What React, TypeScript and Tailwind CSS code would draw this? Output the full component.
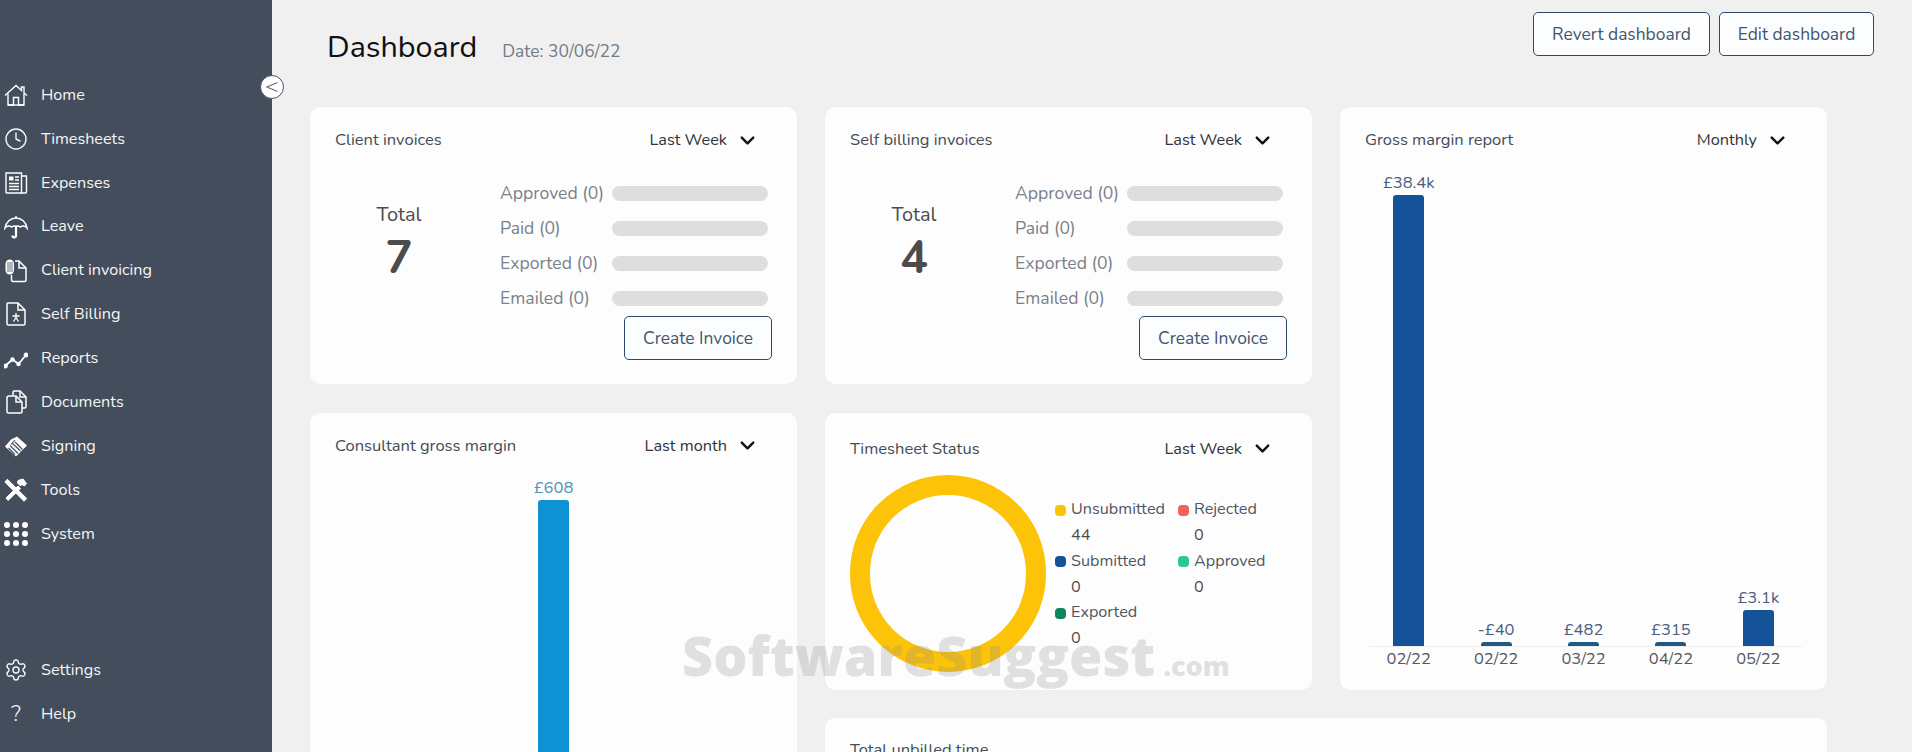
import React from "react";
import { ChevronDown, Clock, Settings } from "lucide-react";

const font = "font-['Nunito','Lato','Noto_Sans',sans-serif]";

function HomeIcon() {
  return (
    <svg viewBox="0 0 24 24" className="h-[24px] w-[24px]" fill="none" stroke="white" strokeWidth="1.4">
      <path d="M1 12.5 12 2.5l5.5 5V4H20v6l3 2.5" />
      <path d="M4 10.5V22h5.5v-7.5h5V22H20V10.5" />
      <path d="M4 22h16" />
    </svg>
  );
}

function ExpensesIcon() {
  return (
    <svg viewBox="0 0 24 24" className="h-[24px] w-[24px]" fill="none" stroke="white" strokeWidth="1.4">
      <path d="M2 2h15.5v20H3a1 1 0 0 1-1-1z" />
      <path d="M17.5 5h5v16a1 1 0 0 1-1 1h-4" />
      <rect x="5" y="5.5" width="4.5" height="4" fill="white" stroke="none" />
      <path d="M11 6h4M11 9h4M5 12.5h10M5 15.5h10M5 18.5h10" />
    </svg>
  );
}

function LeaveIcon() {
  return (
    <svg viewBox="0 0 24 24" className="h-[24px] w-[24px]" fill="none" stroke="white" strokeWidth="1.5">
      <path d="M12 1v2" />
      <path d="M1 13C2 7 6.5 3 12 3s10 4 11 10c-2-2.5-5-2.5-6.5-1-1.5-1.5-7.5-1.5-9 0C6 10.5 3 10.5 1 13z" />
      <path d="M12 11v9.5a1.8 1.8 0 0 1-3.6 0" strokeWidth="2.2" />
    </svg>
  );
}

function ClientInvoiceIcon() {
  return (
    <svg viewBox="0 0 24 24" className="h-[24px] w-[24px]" fill="none" stroke="white" strokeWidth="1.5">
      <path d="M11 2h4l7 7v12a1.5 1.5 0 0 1-1.5 1.5H9A1.5 1.5 0 0 1 7.5 21v-5" />
      <path d="M15 2v7h7" />
      <rect x="1.5" y="0.5" width="8.5" height="15" rx="4.2" fill="white" stroke="none" />
      <path d="M4 3v10M6 3v10M8 3v10" stroke="#434d5b" strokeWidth="0.8" />
    </svg>
  );
}

function SelfBillingIcon() {
  return (
    <svg viewBox="0 0 24 24" className="h-[24px] w-[24px]" fill="none" stroke="white" strokeWidth="1.5">
      <path d="M4 1h10l7 7v13.5a1.5 1.5 0 0 1-1.5 1.5h-15A1.5 1.5 0 0 1 3 21.5V2a1 1 0 0 1 1-1z" />
      <path d="M14 1v7h7" />
      <path d="M8.5 14h7M12 11v4.5M12 15.5l-2.5 4M12 15.5l2.5 4" strokeWidth="1.3" />
    </svg>
  );
}

function ReportsIcon() {
  return (
    <svg viewBox="0 0 24 24" className="h-[24px] w-[24px]" fill="none" stroke="white" strokeWidth="1.8">
      <path d="M1 20 8.5 13.5l6 4.5L22 9" />
      <circle cx="1.5" cy="20" r="1.5" fill="white" />
      <circle cx="8.5" cy="13.5" r="1.3" fill="white" />
      <circle cx="14.5" cy="18" r="1.3" fill="white" />
      <circle cx="22" cy="9" r="1.5" fill="white" />
    </svg>
  );
}

function DocumentsIcon() {
  return (
    <svg viewBox="0 0 24 24" className="h-[24px] w-[24px]" fill="none" stroke="white" strokeWidth="1.5">
      <path d="M9 5V2.5A1.5 1.5 0 0 1 10.5 1H16l6 6v9.5a1.5 1.5 0 0 1-1.5 1.5H18" />
      <path d="M4.5 6H12l6 6v9.5a1.5 1.5 0 0 1-1.5 1.5h-12A1.5 1.5 0 0 1 3 21.5V7.5A1.5 1.5 0 0 1 4.5 6z" />
      <path d="M12 6v6h6M16 1v6h6" />
    </svg>
  );
}

function SigningIcon() {
  return (
    <svg viewBox="0 0 24 24" className="h-[24px] w-[24px]" fill="white">
      <path d="M13 2.5 23 11.5 12 22.5 1 12.5 7 5.5z" />
      <path d="M11 6 7 10.5M8 9l8.5 8M6 11.5l8 8M4.5 14l6.5 6.5M11 8l7.5 7.5" stroke="#434d5b" strokeWidth="1.1" fill="none" />
    </svg>
  );
}

function ToolsIcon() {
  return (
    <svg viewBox="0 0 24 24" className="h-[24px] w-[24px]" fill="white" stroke="white">
      <path d="M3.5 2 22 20.5 20 22.5 1.5 4z" strokeWidth="1.6" />
      <path d="M14 2.5 19 1l3.5 4.5-2 2.5-2.5-1.5-1.5 1.5-3-3z" />
      <path d="M14 8 2 20l2 2.5L16.5 10.5z" />
    </svg>
  );
}

function SystemIcon() {
  const dots = [3, 12, 21];
  return (
    <svg viewBox="0 0 24 24" className="h-[24px] w-[24px]" fill="white">
      {dots.map((y) => dots.map((x) => <circle key={`${x}-${y}`} cx={x} cy={y} r="3" />))}
    </svg>
  );
}

const mainNav = [
  { label: "Home", icon: <HomeIcon /> },
  { label: "Timesheets", icon: <Clock className="h-[24px] w-[24px]" strokeWidth={1.4} /> },
  { label: "Expenses", icon: <ExpensesIcon /> },
  { label: "Leave", icon: <LeaveIcon /> },
  { label: "Client invoicing", icon: <ClientInvoiceIcon /> },
  { label: "Self Billing", icon: <SelfBillingIcon /> },
  { label: "Reports", icon: <ReportsIcon /> },
  { label: "Documents", icon: <DocumentsIcon /> },
  { label: "Signing", icon: <SigningIcon /> },
  { label: "Tools", icon: <ToolsIcon /> },
  { label: "System", icon: <SystemIcon /> },
];

function NavItem({ label, icon }: { label: string; icon: React.ReactNode }) {
  return (
    <div className="flex h-[43.9px] items-center gap-[13px] pl-[4px] text-[16.2px] text-[#f4f5f7]">
      {icon}
      <span>{label}</span>
    </div>
  );
}

function Sidebar() {
  return (
    <aside className="relative flex h-[752px] w-[272px] shrink-0 flex-col bg-[#434d5b] pt-[73px] pb-[16px] text-white">
      <div className="absolute top-[75px] left-[260px] flex h-[24px] w-[24px] items-center justify-center rounded-full border border-[#4a5361] bg-white">
        <svg viewBox="0 0 14 14" className="h-[14px] w-[14px]" fill="none" stroke="#6b7280" strokeWidth="1.3">
          <path d="M12.5 2.5 2 7l10.5 4.5" />
        </svg>
      </div>
      <nav className="flex flex-col">
        {mainNav.map((item) => (
          <NavItem key={item.label} {...item} />
        ))}
      </nav>
      <div className="mt-auto flex flex-col">
        <NavItem label="Settings" icon={<Settings className="h-[24px] w-[24px]" strokeWidth={1.4} />} />
        <NavItem
          label="Help"
          icon={<span className="flex h-[24px] w-[24px] items-center justify-center text-[22px] font-light">?</span>}
        />
      </div>
    </aside>
  );
}

function CardHeader({ title, range }: { title: string; range: string }) {
  return (
    <div className="flex items-center justify-between text-[16.5px] leading-[24px]">
      <span className="text-[#444c58]">{title}</span>
      <div className="flex items-center gap-[9px] pr-[13px] text-[16.3px] text-[#30343a]">
        <span>{range}</span>
        <ChevronDown className="h-[23px] w-[23px] text-[#111]" strokeWidth={2.5} />
      </div>
    </div>
  );
}

function OutlineButton({ children, className = "" }: { children: React.ReactNode; className?: string }) {
  return (
    <button className={`flex items-center justify-center rounded-[5px] border border-[#2b4a6b] bg-[#fcfdfe] text-[17.4px] text-[#44566c] ${className}`}>
      {children}
    </button>
  );
}

function InvoiceCard({ title, total }: { title: string; total: number }) {
  const rows = ["Approved (0)", "Paid (0)", "Exported (0)", "Emailed (0)"];
  return (
    <section className="rounded-[10px] bg-[#fdfdfd] px-[25px] pt-[21px] shadow-[0_0_3px_rgba(0,0,0,0.03)]">
      <CardHeader title={title} range="Last Week" />
      <div className="mt-[24px] flex">
        <div className="flex w-[130px] flex-col items-center pt-[24px] pr-[2px] text-[#4c4c4c]">
          <span className="text-[20px] leading-[30px]">Total</span>
          <span className="text-[46px] leading-[56px] font-bold">{total}</span>
        </div>
        <div className="ml-[35px] flex-1">
          {rows.map((row) => (
            <div key={row} className="flex h-[35px] items-center text-[17.6px] text-[#7a8189]">
              <span className="w-[112px] shrink-0 whitespace-nowrap">{row}</span>
              <div className="h-[15px] w-[156px] rounded-full bg-[#dedede]" />
            </div>
          ))}
          <div className="flex">
            <OutlineButton className="ml-[124px] h-[44px] w-[148px]">Create Invoice</OutlineButton>
          </div>
        </div>
      </div>
    </section>
  );
}

const grossBars = [
  { value: "£38.4k", month: "02/22", height: "h-[451px]", color: "bg-[#15529a]" },
  { value: "-£40", month: "02/22", height: "h-[4px]", color: "bg-[#1f5a85]" },
  { value: "£482", month: "03/22", height: "h-[4px]", color: "bg-[#1f5a85]" },
  { value: "£315", month: "04/22", height: "h-[4px]", color: "bg-[#1f5a85]" },
  { value: "£3.1k", month: "05/22", height: "h-[36px]", color: "bg-[#15529a]" },
];

function GrossMarginCard() {
  return (
    <section className="row-span-2 rounded-[10px] bg-[#fdfdfd] px-[25px] pt-[21px] shadow-[0_0_3px_rgba(0,0,0,0.03)]">
      <CardHeader title="Gross margin report" range="Monthly" />
      <div className="mt-[19px] flex h-[475px] items-end">
        {grossBars.map((bar) => (
          <div key={bar.value} className="flex flex-1 flex-col items-center">
            <span className="text-[16.5px] leading-[24px] text-[#4a5e80]">{bar.value}</span>
            <div className={`w-[31px] rounded-t-[3px] ${bar.height} ${bar.color}`} />
          </div>
        ))}
      </div>
      <div className="ml-[4px] h-px bg-[#eeeeee]" />
      <div className="flex">
        {grossBars.map((bar, i) => (
          <span key={i} className="flex-1 text-center text-[16.5px] leading-[24px] text-[#55595f]">
            {bar.month}
          </span>
        ))}
      </div>
    </section>
  );
}

const legend = [
  { label: "Unsubmitted", value: "44", color: "bg-[#fdc308]" },
  { label: "Rejected", value: "0", color: "bg-[#f0625c]" },
  { label: "Submitted", value: "0", color: "bg-[#15529a]" },
  { label: "Approved", value: "0", color: "bg-[#2bc797]" },
  { label: "Exported", value: "0", color: "bg-[#0f8460]" },
];

function TimesheetCard() {
  return (
    <section className="rounded-[10px] bg-[#fdfdfd] px-[25px] pt-[24px] shadow-[0_0_3px_rgba(0,0,0,0.03)]">
      <CardHeader title="Timesheet Status" range="Last Week" />
      <div className="mt-[14px] flex items-center gap-[9px]">
        <div className="h-[197px] w-[196px] shrink-0 rounded-full border-[20px] border-[#fdc308]" />
        <div className="mt-[3px] grid grid-cols-[123px_1fr] text-[16.2px] leading-[25.8px] text-[#4f5661]">
          {legend.map((item) => (
            <div key={item.label}>
              <div className="flex items-center gap-[5px]">
                <span className={`h-[11px] w-[11px] rounded-[4px] ${item.color}`} />
                {item.label}
              </div>
              <div className="pl-[16px] text-[#4c4c4c]">{item.value}</div>
            </div>
          ))}
        </div>
      </div>
    </section>
  );
}

function ConsultantCard() {
  return (
    <section className="row-span-2 h-[340px] overflow-hidden rounded-t-[10px] bg-[#fdfdfd] px-[25px] pt-[21px]">
      <CardHeader title="Consultant gross margin" range="Last month" />
      <div className="mt-[18px] flex flex-col items-center">
        <span className="text-[16.5px] leading-[24px] text-[#4f93b5]">£608</span>
        <div className="h-[260px] w-[31px] rounded-t-[3px] bg-[#0e92d4]" />
      </div>
    </section>
  );
}

function UnbilledCard() {
  return (
    <section className="col-span-2 h-[34px] overflow-hidden rounded-t-[10px] bg-[#fdfdfd] pt-[20px] pl-[25px] text-[16.5px] leading-[24px] text-[#444c58]">
      Total unbilled time
    </section>
  );
}

export default function App() {
  return (
    <div className={`relative flex h-[752px] w-[1912px] overflow-hidden bg-[#f0f0f0] ${font}`}>
      <Sidebar />
      <main className="flex-1 pr-[38px] pl-[38px]">
        <header className="flex h-[107px] items-start pl-[17px]">
          <h1 className="mt-[25px] text-[30.5px] leading-[44px] text-[#111]">Dashboard</h1>
          <span className="mt-[38px] ml-[25px] text-[17.4px] leading-[26px] text-[#737b85]">Date: 30/06/22</span>
          <div className="mt-[12px] ml-auto flex gap-[9px]">
            <OutlineButton className="h-[44px] w-[177px]">Revert dashboard</OutlineButton>
            <OutlineButton className="h-[44px] w-[155px]">Edit dashboard</OutlineButton>
          </div>
        </header>
        <div className="grid w-[1517px] grid-cols-[487px_487px_487px] grid-rows-[277px_277px_34px] gap-x-[28px] gap-y-[28.5px]">
          <InvoiceCard title="Client invoices" total={7} />
          <InvoiceCard title="Self billing invoices" total={4} />
          <GrossMarginCard />
          <ConsultantCard />
          <TimesheetCard />
          <UnbilledCard />
        </div>
      </main>
      <div className="pointer-events-none absolute top-[628px] left-[682px] flex items-baseline gap-[8px] font-['Open_Sans',sans-serif] font-extrabold whitespace-nowrap text-[#8c8c8c]/25">
        <span className="text-[54px] leading-[54px]">SoftwareSuggest</span>
        <span className="text-[27px] leading-[54px]">.com</span>
      </div>
    </div>
  );
}
